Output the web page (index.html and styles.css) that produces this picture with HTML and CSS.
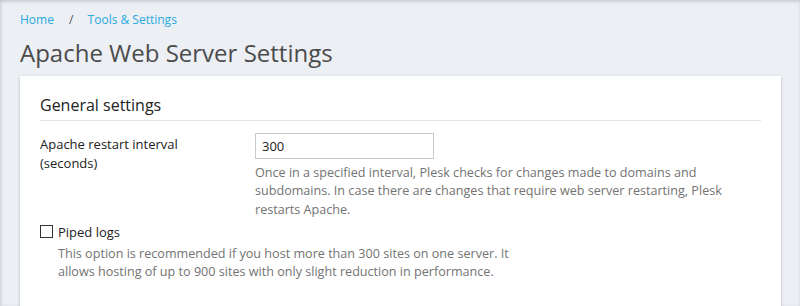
FILE: index.html
```html
<!DOCTYPE html>
<html>
<head>
<meta charset="utf-8">
<link rel="stylesheet" href="styles.css">
</head>
<body>
<div class="page">
  <nav class="breadcrumbs">
    <a href="#">Home</a>
    <span class="sep">/</span>
    <a href="#">Tools &amp; Settings</a>
  </nav>
  <h1 class="title">Apache Web Server Settings</h1>
  <div class="card">
    <h2 class="section-title">General settings</h2>
    <div class="form-row">
      <label class="field-label">Apache restart interval<br>(seconds)</label>
      <div class="field">
        <input class="text-input" type="text" value="300">
        <div class="hint">Once in a specified interval, Plesk checks for changes made to domains and subdomains. In case there are changes that require web server restarting, Plesk restarts Apache.</div>
      </div>
    </div>
    <div class="check-row">
      <label class="check-label"><span class="checkbox"></span>Piped logs</label>
      <div class="hint check-hint">This option is recommended if you host more than 300 sites on one server. It allows hosting of up to 900 sites with only slight reduction in performance.</div>
    </div>
  </div>
</div>
</body>
</html>
```
FILE: styles.css
```css
html, body {
  margin: 0;
  padding: 0;
  height: 100%;
}
body {
  background: #eceff4;
  font-family: "Open Sans", sans-serif;
  color: #222;
  box-shadow: inset 0 2px 3px rgba(0,0,0,0.12), inset 2px 0 3px rgba(0,0,0,0.06);
  overflow: hidden;
}
.page {
  padding: 12px 19px 0 20px;
}
.breadcrumbs {
  font-size: 12px;
  line-height: 16px;
  height: 16px;
}
.breadcrumbs a {
  color: #28aade;
  text-decoration: none;
}
.breadcrumbs .sep {
  color: #555;
  margin: 0 11px 0 12px;
}
.title {
  margin: 9px 0 0;
  font-size: 24px;
  line-height: 32px;
  font-weight: 400;
  color: #4b4b4b;
}
.card {
  margin-top: 7px;
  background: #fff;
  box-shadow: 0 1px 3px rgba(0,0,0,0.22);
  padding: 18px 20px 0 20px;
  height: 240px;
}
.section-title {
  margin: 0;
  font-size: 16px;
  font-weight: 400;
  line-height: 22px;
  color: #222;
  padding-bottom: 4px;
  border-bottom: 1px solid #e0e3e8;
}
.form-row {
  display: flex;
  margin-top: 12px;
}
.field-label {
  width: 215px;
  font-size: 13px;
  line-height: 19px;
  color: #222;
  padding-top: 2px;
}
.field {
  flex: 1;
}
.text-input {
  display: block;
  box-sizing: border-box;
  width: 179px;
  height: 26px;
  border: 1px solid #c6cbd2;
  padding: 0 6px;
  font-family: "Open Sans", sans-serif;
  font-size: 13px;
  color: #222;
  margin: 0;
  outline: none;
}
.hint {
  font-size: 12.6px;
  line-height: 18.3px;
  color: #737373;
  margin-top: 5px;
  max-width: 500px;
}
.check-row {
  margin-top: 4px;
}
.check-label {
  display: flex;
  align-items: center;
  font-size: 13px;
  line-height: 18px;
  color: #222;
}
.checkbox {
  display: inline-block;
  box-sizing: border-box;
  width: 13px;
  height: 13px;
  border: 1px solid #333;
  background: #fff;
  margin-right: 5px;
}
.check-hint {
  margin-top: 4px;
  margin-left: 18px;
  max-width: 485px;
}
```
